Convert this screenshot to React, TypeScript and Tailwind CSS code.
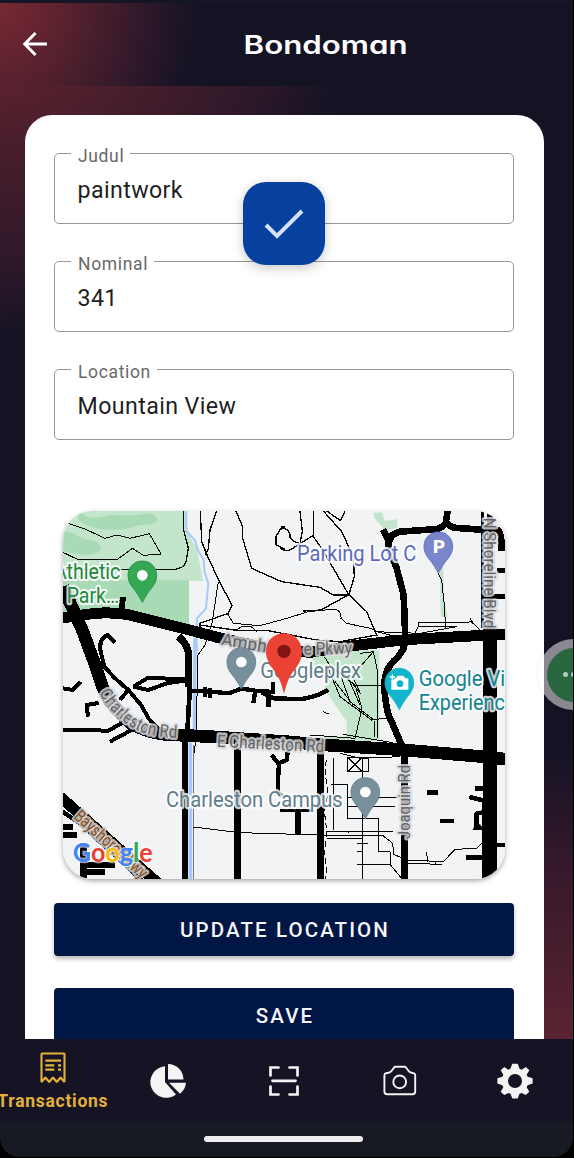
import type { ReactNode } from "react";

function Field({ label, value }: { label: string; value: string }) {
  return (
    <fieldset className="mb-[29px] h-[79px] rounded-[5px] border-[1.5px] border-[#979797] px-[16px]">
      <legend className="h-[16px] pl-[7px] pr-[6px] text-[17.5px] leading-[22px] tracking-[0.65px] text-[#686868]">
        {label}
      </legend>
      <div className="px-[6.5px] pt-[14.6px] text-[23.2px] leading-[28px] tracking-[0.4px] text-[#1f1f1f]">
        {value}
      </div>
    </fieldset>
  );
}

function Pin({ x, y, fill, edge, children }: { x: number; y: number; fill: string; edge: string; children?: ReactNode }) {
  return (
    <g transform={`translate(${x} ${y})`}>
      <path
        d="M0-43C-25-43-43-24-43 0C-43 22-31 34-20 48C-11 60-6 70 0 81C6 70 11 60 20 48C31 34 43 22 43 0C43-24 25-43 0-43Z"
        fill={fill}
        stroke={edge}
        strokeWidth="2.5"
      />
      {children ?? <circle r="16" fill="#fff" />}
    </g>
  );
}

function Label({ x, y, w, color, children }: { x: number; y: number; w: number; color: string; children: string }) {
  return (
    <text
      x={x}
      y={y + 1.5}
      textLength={w}
      lengthAdjust="spacingAndGlyphs"
      fontSize={66}
      fill={color}
      stroke="#fff"
      strokeWidth="13"
      strokeOpacity="0.82"
      strokeLinejoin="round"
      paintOrder="stroke"
    >
      {children}
    </text>
  );
}

const roadLabel = {
  fontSize: 52,
  fill: "#62656a",
  stroke: "#dedede",
  strokeWidth: 14,
  strokeOpacity: 0.82,
  strokeLinejoin: "round" as const,
  paintOrder: "stroke",
};

function StreetMap() {
  return (
    <svg viewBox="9 18 1326 1104" className="block h-full w-full" fontFamily="Roboto, sans-serif">
      <path d="M0 0H1340V1130H0Z" fill="#f1f3f4" />
      <g fill="#c2e5cb">
        <path d="M9 18H378L376 60L394 105L410 130L430 228H9Z" />
        <path d="M940 24L965 22L975 48L1012 43V68L975 76L945 42Z" />
        <path d="M1140 185H1150V280L1163 335H1142Z" />
        <path d="M760 436H958V708H795V695H860V650L795 555V520L755 490Z" />
      </g>
      <g fill="#a9dab6">
        <path d="M9 226H387V360L190 320L9 335Z" />
        <path d="M62 18Q75 45 125 36C170 22 200 38 250 27Q290 20 292 45C286 62 255 56 230 62C190 80 130 78 90 63C55 55 45 35 62 18Z" />
        <path d="M12 80C40 75 60 105 98 107C130 115 127 135 110 144C75 155 45 147 9 138Z" />
      </g>
      <path d="M379 18V78L404 105L415 138L431 165L434 203L445 235L438 310L411 340L408 390L411 430L404 470L402 680L389 720" fill="none" stroke="#a7c9fc" strokeWidth="6" />
      <path d="M405 400L403 690" stroke="#a7c9fc" strokeWidth="10" />
      <g fill="none" stroke="#050505" strokeWidth="3" shapeRendering="crispEdges">
        <path d="M24 55L75 72L135 100L170 90L210 100L268 86L303 147L250 151L217 130L170 165L50 162L9 142" />
        <path d="M370 18V72L385 130L378 170Q373 190 340 194H9M421 18L425 110L441 150L478 230L516 300L505 325L420 355V380L480 400M470 18L450 75L445 130L436 150" strokeWidth="4" />
        <path d="M475 230L457 350L435 420L414 450L408 700L400 760M502 325L520 355L600 362L680 340L745 320L825 312Q845 318 843 340L860 355L935 371L950 380L1000 393" />
        <path d="M528 18L548 65V100L575 190L665 230L780 247L820 270H865L782 315L730 318M675 66H665L648 95V120L675 132" strokeWidth="4" />
        <path d="M420 360L530 376H620L770 405L840 410L950 390L920 320L865 267L785 130L758 92L720 116L690 135Q670 140 660 128M660 73Q685 65 690 90Q685 105 720 116L727 80L720 18M761 18V95M790 18L845 80L880 155L883 215L867 268M800 18L842 47L855 20" strokeWidth="4" />
        <path d="M530 375L545 365L575 366L590 380M945 380L1080 385L1190 365L1075 363V352L1235 351L1265 380M1075 363L1063 387M1230 340L1240 355M1135 205L1145 225L1153 300L1157 370" />
        <path d="M793 455L812 485L885 540L906 610L885 700L750 690M812 485L870 520L940 440L900 445M940 440L953 500V700M800 480L840 575L935 645L985 638M845 520L870 590L942 645L943 695M865 520L900 600M825 530L880 600M880 520L902 567L880 540H970M850 688L1000 713" />
        <path d="M400 720V1122" stroke="#777" strokeWidth="4" />
        <path d="M400 966L540 983L780 990L970 993L998 1015L1001 1048L1040 1065L1150 1070L1185 1033L1250 1030L1270 1010M820 760V975M812 838H862V940H955V1040H990M862 878H1010M862 903H1005M908 760V1122M863 757H925V800H863ZM863 757L907 800M907 757L863 800M800 978H1000M800 1000H908M890 1015H925M890 1040H906M890 1078H990L1025 1120M990 1040V1078M1040 1075L1145 1078M1100 1042L1103 1070M1125 1067V1080" />
        <path d="M799 765C788 820 813 850 796 900C789 940 807 970 796 1020C790 1060 806 1090 796 1122" strokeDasharray="18 9" />
        <path d="M790 620L806 627M840 745L900 760L1020 755M865 985L867 978H1000" />
      </g>
      <g fill="none" stroke="#000" strokeLinejoin="round" shapeRendering="crispEdges">
        <path d="M0 340L75 329Q135 318 205 329L400 378L480 399L630 431L750 442L880 422L1035 404L1340 387" strokeWidth="33" />
        <path d="M9 245L42 320L65 370L102 470L127 544L150 590L200 645Q260 690 350 690L470 696L680 710L795 720L1035 735L1280 756L1340 763" strokeWidth="38" />
        <path d="M1290 370V680L1288 1122" strokeWidth="43" />
        <path d="M1268 18V370" strokeWidth="9" />
        <path d="M1290 18V370" strokeWidth="18" />
        <path d="M1163 18L1157 55Q1145 72 1120 73L1020 80Q980 90 987 130L1010 190L1031 270L1036 400Q1037 432 1010 460Q973 490 973 540Q976 620 997 655L1031 735M969 73L986 108M1155 52L1180 68L1290 76H1314Q1326 83 1325 138" strokeWidth="20" />
        <path d="M1310 197H1340M1265 275H1335M1270 380H1335" strokeWidth="14" />
        <path d="M186 325L188 275" strokeWidth="18" />
        <path d="M355 394Q386 420 386 455V545" strokeWidth="22" />
        <path d="M390 540L381 700" strokeWidth="14" />
        <path d="M375 700V1122" strokeWidth="18" />
        <path d="M531 720V1122M782 730V1122" strokeWidth="21" />
        <path d="M1033 730V1122" strokeWidth="22" />
        <path d="M0 875L300 1140" strokeWidth="33" />
        <path d="M0 915L60 955L245 1125" strokeWidth="14" />
        <path d="M165 412L143 390Q115 400 122 440L133 485L163 518L205 555L245 602L265 640L300 678M9 674L145 677L190 652L215 675L150 710M220 545L265 518L385 524M220 545L265 555L320 535L385 525M205 555L180 585M9 550L38 555L62 530M116 594L80 600L84 635" strokeWidth="12" />
        <path d="M384 557L455 560L505 565L545 551L585 557L640 561L638 530M435 545V575M450 550V580M585 561L580 594M625 560V605M605 562L640 580L720 582Q760 580 805 555" strokeWidth="13" />
        <path d="M635 750L655 775L680 765L684 735M657 770L653 850M653 835V860L665 875" strokeWidth="13" />
        <path d="M660 917H755" strokeWidth="8" />
        <path d="M714 917V988" strokeWidth="17" />
        <path d="M1100 863H1134M1140 948H1182M1245 850H1280M1228 876L1270 886M1270 922L1250 926V970M1218 1057H1275M1310 1020H1335" strokeWidth="14" />
        <path d="M9 965H40M9 990H52M70 1015V1118M75 1080H165M70 1100H135" strokeWidth="19" />
      </g>
      <path d="M391 715V1122" stroke="#a7c9fc" strokeWidth="11" />
      <path d="M1238 975L1245 958H1260L1272 975Z" />

      <path id="charleston" d="M117 564Q168 654 262 687Q310 700 440 702" fill="none" />
      <text {...roadLabel}>
        <textPath href="#charleston" textLength="284" lengthAdjust="spacingAndGlyphs">Charleston Rd</textPath>
      </text>
      <text {...roadLabel} x="470" y="725" textLength="322" lengthAdjust="spacingAndGlyphs" transform="rotate(3 470 725)">E Charleston Rd</text>
      <text {...roadLabel} x="482" y="420" textLength="150" lengthAdjust="spacingAndGlyphs" transform="rotate(9 482 420)">Amphi</text>
      <text {...roadLabel} x="731" y="449" textLength="145" lengthAdjust="spacingAndGlyphs" transform="rotate(-1 731 449)">e Pkwy</text>
      <text {...roadLabel} transform="translate(1273 38) rotate(90)" textLength="332" lengthAdjust="spacingAndGlyphs">N Shoreline Blvd</text>
      <text {...roadLabel} transform="translate(1049 1002) rotate(-90)" textLength="222" lengthAdjust="spacingAndGlyphs">Joaquin Rd</text>
      <text {...roadLabel} fill="#8b501d" transform="translate(39 938) rotate(42)" textLength="276" lengthAdjust="spacingAndGlyphs">Bayshore Pkwy</text>

      <Label x={-18} y={221} w={199} color="#23883e">Athletic</Label>
      <Label x={20} y={292} w={157} color="#23883e">Park…</Label>
      <Pin x={247} y={211} fill="#34a853" edge="#23883e" />
      <Label x={711} y={166} w={358} color="#5b69bd">Parking Lot C</Label>
      <Pin x={1135} y={124} fill="#7986cb" edge="#5b69bd">
        <text x="2" y="20" textAnchor="middle" fontSize="56" fontWeight="900" fill="#fff">P</text>
      </Pin>
      <Label x={601} y={516} w={302} color="#607d8b">Googleplex</Label>
      <Pin x={544} y={471} fill="#78909c" edge="#607d8b" />
      <Label x={1076} y={540} w={380} color="#128391">Google Visitor</Label>
      <Label x={1076} y={612} w={290} color="#128391">Experience</Label>
      <Pin x={1018} y={533} fill="#12b5cb" edge="#12b5cb">
        <path d="M-24-13H-11L-5-21H12L18-13H27V21H-24Z" fill="#fff" />
        <circle cx="2" cy="3" r="10" fill="#12b5cb" />
        <path d="M-21-25V-9M-29-17H-13" stroke="#12b5cb" strokeWidth="9" />
        <path d="M-21-25V-9M-29-17H-13" stroke="#fff" strokeWidth="4" />
      </Pin>
      <Label x={318} y={905} w={530} color="#607d8b">Charleston Campus</Label>
      <Pin x={916} y={861} fill="#78909c" edge="#607d8b" />

      <path d="M672 385C641 385 618 409 618 440C618 468 635 485 649 506C661 525 667 545 672 567C677 545 683 525 695 506C710 485 726 468 726 440C726 409 703 385 672 385Z" fill="#ea4335" />
      <circle cx="672" cy="439" r="20" fill="#811511" />
      <text x="38" y="1072" fontSize="78" fontWeight="700" textLength="240" lengthAdjust="spacingAndGlyphs" stroke="#fff" strokeOpacity="0.65" strokeWidth="8" paintOrder="stroke" fontFamily="Lato, sans-serif">
        <tspan fill="#4285f4">G</tspan><tspan fill="#ea4335">o</tspan><tspan fill="#fbbc05">o</tspan><tspan fill="#4285f4">g</tspan><tspan fill="#34a853">l</tspan><tspan fill="#ea4335">e</tspan>
      </text>
    </svg>
  );
}

function NavIcons() {
  return (
    <div className="-ml-[5px] grid h-[83px] w-[578px] shrink-0 grid-cols-5 bg-[#161424] text-[#f4f4f4]">
      <div className="flex flex-col items-center pt-[13px] text-[#e2b13c]">
        <svg width="26" height="32" viewBox="0 0 26 32" fill="none" stroke="currentColor" strokeWidth="2.1">
          <path d="M1.5 30V2.2Q1.5 1.5 2.2 1.5H23.8Q24.5 1.5 24.5 2.2V30L20.6 25.5L16.8 30L13 25.5L9.2 30L5.4 25.5Z" strokeLinejoin="bevel" />
          <path d="M5.3 8.7H21M5.3 13.3H14.3M18 13.3H21M5.3 17.7H14.3M18 17.7H21" strokeWidth="2.2" />
        </svg>
        <span className="mt-[6px] whitespace-nowrap text-[17.5px] font-bold leading-[22px] tracking-[0.72px]">Transactions</span>
      </div>
      <div className="flex items-center justify-center">
        <svg width="36" height="34" viewBox="0 0 36 34" fill="currentColor">
          <path d="M15 2.3V18L26 30.4A15.8 15.8 0 1 1 15 2.3Z" />
          <path d="M18 0A15.6 15.6 0 0 1 33.5 15.4H18Z" />
          <path d="M19 18.8H36A15.5 15.5 0 0 1 30 29.7Z" />
        </svg>
      </div>
      <div className="flex items-center justify-center">
        <svg width="32" height="32" viewBox="0 0 32 32" fill="none" stroke="currentColor" strokeWidth="2.7">
          <path d="M10.5 2.5H2.5V10.5M21.5 2.5H29.5V10.5M29.5 21.5V29.5H21.5M2.5 21.5V29.5H10.5M4.5 15.8H27.5" strokeLinecap="round" />
        </svg>
      </div>
      <div className="flex items-center justify-center">
        <svg width="34" height="32" viewBox="0 0 34 32" fill="none" stroke="currentColor" strokeWidth="1.9" className="mt-px">
          <path d="M12.5 1.8H21.5Q22.5 1.8 23 2.5L25.4 5.8Q26.5 7.4 28.5 7.8L31 8.3Q32.2 8.7 32.2 10V26.5Q32.2 29.2 29.5 29.2H4Q1.4 29.2 1.4 26.5V10.2Q1.4 8.5 3 8.2L5.5 7.8Q7.6 7.4 8.7 5.8L11 2.6Q11.5 1.8 12.5 1.8Z" />
          <circle cx="16.7" cy="16.9" r="6.4" />
        </svg>
      </div>
      <div className="flex items-center justify-center">
        <svg width="36" height="36" viewBox="-18 -18 36 36" fill="currentColor">
          <path fillRule="evenodd" d="M-2.7-17.3H2.7L4.6-12.3Q5.7-12 6.7-11.2L10.8-14.1L14.3-10.7L11.7-6.2L12.6-4.3L17.6-2.8V2.5L12.6 4.2L11.7 6.3L14.3 10.7L10.8 14.1L6.5 12L4.5 12.7L2.7 17.4H-2.7L-4.5 12.7L-6.5 12L-10.8 14.1L-14.3 10.7L-11.7 6.3L-12.6 4.2L-17.6 2.5V-2.8L-12.6-4.3L-11.7-6.2L-14.3-10.7L-10.8-14.1L-6.7-11.2Q-5.7-12-4.6-12.3ZM0-7A7 7 0 1 0 0 7A7 7 0 1 0 0-7Z" />
        </svg>
      </div>
    </div>
  );
}

export default function App() {
  return (
    <div className="h-[1158px] w-[574px] overflow-hidden bg-black font-[Roboto,sans-serif]">
      <div className="relative flex h-[1157px] w-[573px] flex-col overflow-hidden rounded-b-[20px] bg-[#141324]">
        <div className="h-[3px] shrink-0 bg-[#151526]" />
        <header className="grid h-[83px] shrink-0 grid-cols-[76px_1fr] bg-[radial-gradient(ellipse_198px_230px_at_0_0,#782833_0%,#54212d_38%,#2e182a_74%,#141324_100%)]">
          <svg viewBox="0 0 24 24" className="ml-[22px] mt-[28px] h-[26px] w-[26px]" fill="none" stroke="#fff" strokeWidth="2.7">
            <path d="M23 12H2.5M12.5 1.8L2.5 12L12.5 22.2" />
          </svg>
          <h1 className="flex h-[84px] items-center justify-center pr-[75px] text-white">
            <span className="ml-[77px] origin-center scale-x-[1.25] whitespace-nowrap font-[Inter,sans-serif] text-[25px] font-semibold leading-[32px] [font-feature-settings:'cv11']">
              Bondoman
            </span>
          </h1>
        </header>
        <main className="h-[953px] shrink-0 overflow-hidden bg-[radial-gradient(ellipse_350px_340px_at_0_-83px,#782833_0%,#53202d_30%,#2c1829_78%,transparent_100%),radial-gradient(ellipse_350px_400px_at_100%_1060px,#782833_0%,#5a2331_28%,#35192b_70%,transparent_100%)] pl-[24.5px] pr-[29px] pt-[29px]">
          <div className="h-[1000px] rounded-[27px] bg-white pl-[29.5px] pr-[30px] pt-[30px]">
            <Field label="Judul" value="paintwork" />
            <Field label="Nominal" value="341" />
            <Field label="Location" value="Mountain View" />
            <div className="mx-[9px] mt-[71px] h-[368px] overflow-hidden rounded-[30px] shadow-[0_2px_5px_rgba(0,0,0,.35)]">
              <StreetMap />
            </div>
            <button className="mt-[24px] block h-[53px] w-full rounded-[4px] bg-[#001645] pl-[2px] pt-[2px] text-[20.5px] font-medium tracking-[2.1px] text-[#f5f5f5] shadow-[0_3px_4px_rgba(0,0,0,.28)]">
              UPDATE LOCATION
            </button>
            <button className="mt-[32px] block h-[54px] w-full rounded-[4px] bg-[#001645] pl-[2px] pt-[3px] text-[20.5px] font-medium tracking-[2.1px] text-[#f5f5f5]">
              SAVE
            </button>
          </div>
        </main>
        <NavIcons />
        <div className="flex flex-1 justify-center bg-[#171923] pr-[6px] pt-[14px]">
          <div className="h-[6px] w-[159px] rounded-full bg-[#eee]" />
        </div>
        <div className="absolute left-[243px] top-[182px] flex h-[83px] w-[82px] items-center justify-center rounded-[23px] bg-[#07419f] shadow-[0_3px_12px_rgba(0,0,0,.22)]">
          <svg width="40" height="32" viewBox="0 0 40 32" fill="none" stroke="#d5e2ff" strokeWidth="4">
            <path d="M2 17L13 28L38 3" />
          </svg>
        </div>
        <div className="absolute left-[538px] top-[639px] flex h-[71px] w-[71px] items-center justify-center rounded-full bg-white/50 shadow-[0_0_4px_rgba(0,0,0,.08)]">
          <div className="flex h-[54px] w-[54px] items-center justify-center gap-[3px] rounded-full bg-[#2a6741]">
            <i className="h-[5px] w-[5px] rounded-full bg-[#b4c7bc]" />
            <i className="h-[5px] w-[5px] rounded-full bg-[#b4c7bc]" />
            <i className="h-[5px] w-[5px] rounded-full bg-[#b4c7bc]" />
          </div>
        </div>
      </div>
    </div>
  );
}
